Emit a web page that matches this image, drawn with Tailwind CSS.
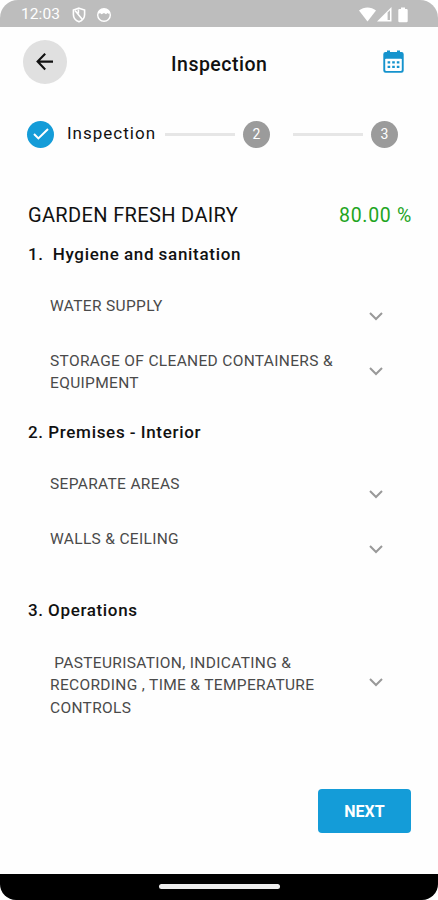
<!DOCTYPE html>
<html lang="en">
<head>
    <meta charset="UTF-8">
    <meta name="viewport" content="width=device-width, initial-scale=1.0">
    <title>Inspection</title>
    <script src="https://cdn.jsdelivr.net/npm/@tailwindcss/browser@4"></script>
</head>
<body class="bg-white font-[Roboto,sans-serif] text-[#111111]">

    <!-- Phone screen -->
    <div class="flex flex-col w-[438px] h-[900px] overflow-hidden rounded-t-[18px] rounded-b-[16px] bg-[#fefefe]">

        <!-- Status bar -->
        <div class="flex items-center h-[27px] pl-[21px] pr-[30px] pt-[2px] bg-[#bdbdbd] text-white shrink-0">
            <span class="w-[51px] pt-px text-[15.5px] leading-none tracking-[0.1px]">12:03</span>
            <svg class="w-[14px] h-[16px]" viewBox="0 0 14 16" fill="none" stroke="currentColor" stroke-width="1.6">
                <path d="M7 1.2 L12.6 3 V7.5 C12.6 11 10.2 13.6 7 14.8 C3.8 13.6 1.4 11 1.4 7.5 V3 Z"/>
                <path d="M3 3.4 L10.4 12.4 M6.4 2.4 V6.6"/>
            </svg>
            <svg class="ml-[10px] w-[16px] h-[16px]" viewBox="0 0 16 16">
                <circle cx="8" cy="8" r="6.3" fill="none" stroke="currentColor" stroke-width="1.4"/>
                <path d="M2 5.5 C4 0.5 12 0.5 14 5.5 L13 7 L11.5 6 L10 7.2 L8 6 L5.5 7.2 L4 6 L2.6 7 Z" fill="currentColor"/>
            </svg>
            <div class="flex items-center ml-auto">
                <svg class="w-[17px] h-[15px]" viewBox="0 0 17 15" fill="currentColor">
                    <path d="M0 3.6 C5 -0.4 12 -0.4 17 3.6 L8.5 14.4 Z"/>
                </svg>
                <svg class="ml-[1px] w-[15px] h-[15px]" viewBox="0 0 15 15">
                    <path d="M0 14.5 L14.5 0 V14.5 Z" fill="currentColor"/>
                    <path d="M10.6 5.6 L13 3.2 V13 H10.6 Z" fill="#bdbdbd"/>
                </svg>
                <svg class="ml-[6px] w-[10px] h-[16px]" viewBox="0 0 10 16" fill="currentColor">
                    <path d="M3 0.5 H7 V2 H8.5 Q9.7 2 9.7 3.2 V14 Q9.7 15.3 8.5 15.3 H1.5 Q0.3 15.3 0.3 14 V3.2 Q0.3 2 1.5 2 H3 Z"/>
                </svg>
            </div>
        </div>

        <!-- Header -->
        <div class="flex items-center h-[69px] pl-[23px] pr-[34px] shrink-0">
            <button class="flex items-center justify-center w-[44px] h-[44px] rounded-full bg-[#e0e0e0]">
                <svg class="w-[18px] h-[18px]" viewBox="0 0 18 18" fill="none" stroke="#111111" stroke-width="2.1">
                    <path d="M17 8.6 H2 M9.2 0.8 L1.6 8.6 L9.2 16.4"/>
                </svg>
            </button>
            <h1 class="ml-[104px] pt-[6px] text-[19.5px] font-medium tracking-[0.5px]">Inspection</h1>
            <svg class="w-[21px] h-[24px] ml-auto" viewBox="0 0 21 24" fill="#1593cd">
                <path d="M2.5 2 H4 V0.5 H7 V2 H14 V0.5 H17 V2 H18.5 Q20.7 2 20.7 4.2 V20.6 Q20.7 22.8 18.5 22.8 H2.5 Q0.3 22.8 0.3 20.6 V4.2 Q0.3 2 2.5 2 Z"/>
                <rect x="2.2" y="8.8" width="16.6" height="12.1" rx="0.8" fill="#ffffff"/>
                <path d="M4.6 11.2 H7.2 V13.4 H4.6 Z M9.2 11.2 H11.8 V13.4 H9.2 Z M13.8 11.2 H16.4 V13.4 H13.8 Z M4.6 15.8 H7.2 V18 H4.6 Z M9.2 15.8 H11.8 V18 H9.2 Z M13.8 15.8 H16.4 V18 H13.8 Z"/>
            </svg>
        </div>

        <!-- Stepper -->
        <div class="flex items-center h-[76px] pl-[27px] shrink-0">
            <div class="flex items-center justify-center w-[27px] h-[27px] rounded-full bg-[#149cd8]">
                <svg class="w-[16px] h-[12px]" viewBox="0 0 16 12" fill="none" stroke="#ffffff" stroke-width="2">
                    <path d="M1 6 L5.4 10.4 L15 1"/>
                </svg>
            </div>
            <span class="w-[98px] ml-[13px] text-[17px] tracking-[1px]">Inspection</span>
            <div class="w-[70px] h-[3px] bg-[#e6e6e6]"></div>
            <div class="flex items-center justify-center w-[27px] h-[27px] ml-[8px] rounded-full bg-[#9b9b9b] text-[14px] text-white">2</div>
            <div class="w-[70px] h-[3px] ml-[23px] bg-[#e6e6e6]"></div>
            <div class="flex items-center justify-center w-[27px] h-[27px] ml-[8px] rounded-full bg-[#9b9b9b] text-[14px] text-white">3</div>
        </div>

        <!-- Inspection list -->
        <div class="flex flex-col pl-[28px] pr-[26px] pt-[31px]">
            <div class="flex items-center justify-between h-[24px]">
                <h2 class="text-[20px] tracking-[0.35px]">GARDEN FRESH DAIRY</h2>
                <span class="pt-[2px] text-[19.5px] tracking-[0.7px] text-[#1fa51f]">80.00 %</span>
            </div>

            <!-- Section 1 -->
            <h3 class="h-[24px] mt-[15px] text-[17px] leading-[24px] font-medium tracking-[0.7px] [word-spacing:-0.5px] whitespace-pre">1.  Hygiene and sanitation</h3>
            <div class="flex items-start justify-between h-[55px] mt-[29px] pl-[22px] pr-[29px]">
                <p class="text-[15.5px] leading-[22.4px] tracking-[0.33px] text-[#4a4a4a]">WATER SUPPLY</p>
                <svg class="w-[14px] h-[9px] mt-[17px]" viewBox="0 0 14 9" fill="none" stroke="#999999" stroke-width="2"><path d="M1 1 L7 7 L13 1"/></svg>
            </div>
            <div class="flex items-start justify-between h-[55px] pl-[22px] pr-[29px]">
                <p class="text-[15.5px] leading-[22.4px] tracking-[0.33px] text-[#4a4a4a]">STORAGE OF CLEANED CONTAINERS &amp;<br>EQUIPMENT</p>
                <svg class="w-[14px] h-[9px] mt-[17px]" viewBox="0 0 14 9" fill="none" stroke="#999999" stroke-width="2"><path d="M1 1 L7 7 L13 1"/></svg>
            </div>

            <!-- Section 2 -->
            <h3 class="h-[24px] mt-[15px] text-[17px] leading-[24px] font-medium tracking-[0.7px] [word-spacing:-0.5px]">2. Premises - Interior</h3>
            <div class="flex items-start justify-between h-[55px] mt-[29px] pl-[22px] pr-[29px]">
                <p class="text-[15.5px] leading-[22.4px] tracking-[0.33px] text-[#4a4a4a]">SEPARATE AREAS</p>
                <svg class="w-[14px] h-[9px] mt-[17px]" viewBox="0 0 14 9" fill="none" stroke="#999999" stroke-width="2"><path d="M1 1 L7 7 L13 1"/></svg>
            </div>
            <div class="flex items-start justify-between h-[55px] pl-[22px] pr-[29px]">
                <p class="text-[15.5px] leading-[22.4px] tracking-[0.33px] text-[#4a4a4a]">WALLS &amp; CEILING</p>
                <svg class="w-[14px] h-[9px] mt-[17px]" viewBox="0 0 14 9" fill="none" stroke="#999999" stroke-width="2"><path d="M1 1 L7 7 L13 1"/></svg>
            </div>

            <!-- Section 3 -->
            <h3 class="h-[24px] mt-[15px] text-[17px] leading-[24px] font-medium tracking-[0.65px] [word-spacing:-0.5px]">3. Operations</h3>
            <div class="flex items-start justify-between h-[70px] mt-[30px] pl-[22px] pr-[29px]">
                <p class="text-[15.5px] leading-[22.4px] tracking-[0.33px] text-[#4a4a4a] whitespace-pre">&nbsp;PASTEURISATION, INDICATING &amp;<br>RECORDING , TIME &amp; TEMPERATURE<br>CONTROLS</p>
                <svg class="w-[14px] h-[9px] mt-[26px]" viewBox="0 0 14 9" fill="none" stroke="#999999" stroke-width="2"><path d="M1 1 L7 7 L13 1"/></svg>
            </div>
        </div>

        <!-- Next button and navigation bar -->
        <div class="flex flex-col mt-auto shrink-0">
            <button class="self-end w-[93px] h-[44px] mr-[27px] mb-[41px] pt-[2px] rounded-[4px] bg-[#149cd8] text-[16px] font-bold text-white">NEXT</button>
            <div class="flex justify-center h-[26px] pt-[10px] bg-black">
                <div class="w-[121px] h-[5px] rounded-full bg-[#eeeeee]"></div>
            </div>
        </div>
    </div>

</body>
</html>
